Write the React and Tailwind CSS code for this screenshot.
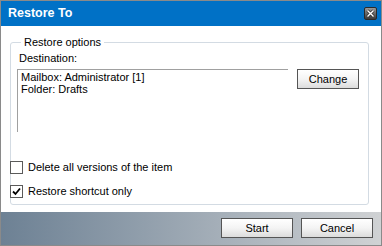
import React from 'react';

function CloseButton() {
  return (
    <div className="w-[13px] h-[13px] rounded-[2px] border border-[#2a2a2a] bg-linear-to-b from-[#9a9a9a] to-[#3a3a3a] flex items-center justify-center">
      <svg width="9" height="9" viewBox="0 0 9 9">
        <path d="M1.5 1.5 L7.5 7.5 M7.5 1.5 L1.5 7.5" stroke="#333" strokeWidth="3" />
        <path d="M1.5 1.5 L7.5 7.5 M7.5 1.5 L1.5 7.5" stroke="#fff" strokeWidth="1.4" />
      </svg>
    </div>
  );
}

function Button({ children, className }) {
  return (
    <button
      className={
        'h-[20px] border border-[#555] bg-linear-to-b from-[#ffffff] via-[#f4f4f4] to-[#dcdcdc] text-[11px] text-black leading-none ' +
        className
      }
    >
      {children}
    </button>
  );
}

function Checkbox({ checked, label }) {
  return (
    <label className="flex items-center gap-[5px] h-[13px]">
      <span className="w-[13px] h-[13px] border border-[#5a5a5a] bg-white flex items-center justify-center">
        {checked && (
          <svg width="9" height="9" viewBox="0 0 9 9">
            <path d="M1 4.5 L3.5 7 L8 1.5" stroke="#000" strokeWidth="1.8" fill="none" />
          </svg>
        )}
      </span>
      <span>{label}</span>
    </label>
  );
}

export default function App() {
  return (
    <div className="w-[382px] h-[246px] border border-[#8a8a8a] flex flex-col text-[11px] text-black font-['Liberation_Sans',Arial,sans-serif] overflow-hidden">
      <div className="h-[25px] shrink-0 bg-[#0071c6] flex items-center justify-between pl-[7px] pr-[4px]">
        <span className="text-white font-bold text-[12.5px]">Restore To</span>
        <CloseButton />
      </div>

      <div className="flex-1 bg-white pt-[10px] pl-[9px] pr-[12px] pb-[7px]">
        <fieldset className="h-full border border-[#d3dbe3] rounded-[3px] pl-[6px] pr-[9px]">
          <legend className="ml-[4px] px-[3px] leading-[12px]">Restore options</legend>
          <div className="leading-[13px] ml-[2px] mt-[4px]">Destination:</div>
          <div className="flex items-start mt-[4px]">
            <div className="w-[271px] h-[63px] border-t border-l border-[#a0a0a0] pl-[3px] pt-[1px] leading-[12px]">
              <div>Mailbox: Administrator [1]</div>
              <div>Folder: Drafts</div>
            </div>
            <div className="flex-1 flex justify-end">
              <Button className="w-[62px]">Change</Button>
            </div>
          </div>
          <div className="flex flex-col gap-[11px] mt-[29px] -ml-[7px]">
            <Checkbox label="Delete all versions of the item" />
            <Checkbox checked label="Restore shortcut only" />
          </div>
        </fieldset>
      </div>

      <div className="h-[33px] shrink-0 bg-linear-to-r from-[#6d8194] to-[#d0d2d4] flex items-start justify-end gap-[8px] pt-[6px] pr-[8px]">
        <Button className="w-[72px]">Start</Button>
        <Button className="w-[72px]">Cancel</Button>
      </div>
    </div>
  );
}
